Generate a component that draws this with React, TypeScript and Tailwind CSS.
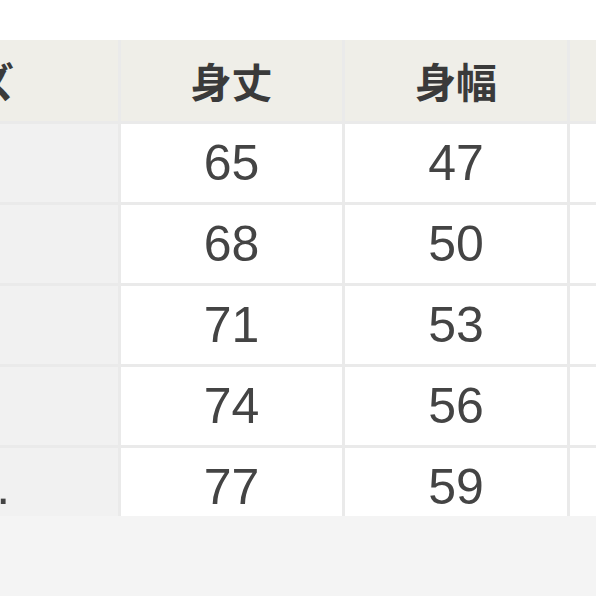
import React from "react";

const rows = [
  { label: "S", a: "65", b: "47" },
  { label: "M", a: "68", b: "50" },
  { label: "L", a: "71", b: "53" },
  { label: "XL", a: "74", b: "56" },
  { label: "XXL.", a: "77", b: "59" },
];

export default function App() {
  return (
    <div className="w-[596px] h-[596px] bg-white overflow-hidden flex flex-col">
      <div className="h-[40px] bg-white shrink-0" />
      <div className="h-[476px] overflow-hidden shrink-0 bg-[#eaeaea]">
        <div
          className="ml-[-212px] grid grid-cols-[330px_221px_222px_222px] grid-rows-[81px_78px_78px_78px_78px_78px] gap-[3px] bg-[#eaeaea]"
          style={{ width: 330 + 221 + 222 + 222 + 9 }}
        >
          <div className="bg-[#efeee8] flex items-center justify-center text-[41px] font-bold text-[#3a3a3a] [font-family:'Noto_Sans_CJK_JP',sans-serif]">
            サイズ
          </div>
          <div className="bg-[#efeee8] flex items-center justify-center text-[41px] font-bold text-[#3a3a3a] [font-family:'Noto_Sans_CJK_JP',sans-serif]">
            身丈
          </div>
          <div className="bg-[#efeee8] flex items-center justify-center text-[41px] font-bold text-[#3a3a3a] [font-family:'Noto_Sans_CJK_JP',sans-serif]">
            身幅
          </div>
          <div className="bg-[#efeee8] flex items-center justify-center text-[41px] font-bold text-[#3a3a3a] [font-family:'Noto_Sans_CJK_JP',sans-serif]">
            袖丈
          </div>
          {rows.map((r) => (
            <React.Fragment key={r.label}>
              <div className="bg-[#f1f1f1] pl-[6px] flex items-center justify-center text-[50px] text-[#444] [font-family:'Liberation_Sans',sans-serif]">
                {r.label}
              </div>
              <div className="bg-white flex items-center justify-center text-[50px] text-[#444] [font-family:'Liberation_Sans',sans-serif]">
                {r.a}
              </div>
              <div className="bg-white flex items-center justify-center text-[50px] text-[#444] [font-family:'Liberation_Sans',sans-serif]">
                {r.b}
              </div>
              <div className="bg-white" />
            </React.Fragment>
          ))}
        </div>
      </div>
      <div className="flex-1 bg-[#f4f4f4]" />
    </div>
  );
}
